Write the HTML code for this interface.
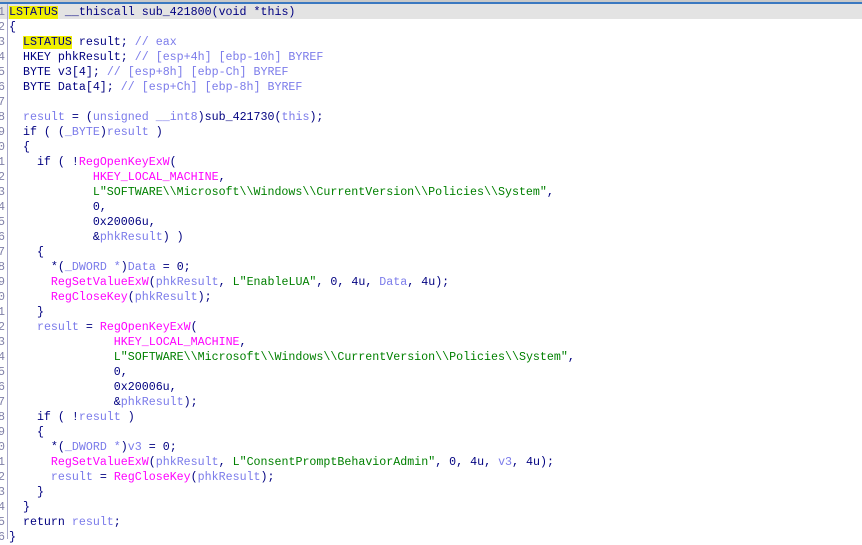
<!DOCTYPE html>
<html><head><style>
body{margin:0;width:862px;height:539px;overflow:hidden;background:#fff;position:relative;font-family:"Liberation Mono",monospace;font-size:11.65px;}
.top{position:absolute;left:0;top:0;width:862px;height:2px;background:#c9c9c9}
.blue{position:absolute;left:0;top:2px;width:862px;height:2px;background:#3a78c0}
.cur{position:absolute;left:0;top:4px;width:862px;height:15px;background:#e3e3e3}
.gut{position:absolute;left:-6px;top:5px;width:11px;color:#8080a8;text-align:right;}
.sep{position:absolute;left:7px;top:4px;width:1px;height:535px;background:#a8a8c8}
.code{position:absolute;left:9px;top:5px;color:#000080;}
.l{height:15px;line-height:15px;white-space:pre}
.v{color:#7b7bea}.f{color:#ff00ff}.s{color:#008000}.h{background:#f0f000}
</style></head><body>
<div class="top"></div><div class="blue"></div><div class="cur"></div>
<div class="sep"></div>
<div class="gut"><div class="l">1</div><div class="l">2</div><div class="l">3</div><div class="l">4</div><div class="l">5</div><div class="l">6</div><div class="l">7</div><div class="l">8</div><div class="l">9</div><div class="l">0</div><div class="l">1</div><div class="l">2</div><div class="l">3</div><div class="l">4</div><div class="l">5</div><div class="l">6</div><div class="l">7</div><div class="l">8</div><div class="l">9</div><div class="l">0</div><div class="l">1</div><div class="l">2</div><div class="l">3</div><div class="l">4</div><div class="l">5</div><div class="l">6</div><div class="l">7</div><div class="l">8</div><div class="l">9</div><div class="l">0</div><div class="l">1</div><div class="l">2</div><div class="l">3</div><div class="l">4</div><div class="l">5</div><div class="l">6</div></div>
<div class="code"><div class="l"><span class="h">LSTATUS</span> __thiscall sub_421800(void *this)</div><div class="l">{</div><div class="l">  <span class="h">LSTATUS</span> result; <span class="v">// eax</span></div><div class="l">  HKEY phkResult; <span class="v">// [esp+4h] [ebp-10h] BYREF</span></div><div class="l">  BYTE v3[4]; <span class="v">// [esp+8h] [ebp-Ch] BYREF</span></div><div class="l">  BYTE Data[4]; <span class="v">// [esp+Ch] [ebp-8h] BYREF</span></div><div class="l"> </div><div class="l">  <span class="v">result</span> = (<span class="v">unsigned __int8</span>)sub_421730(<span class="v">this</span>);</div><div class="l">  if ( (<span class="v">_BYTE</span>)<span class="v">result</span> )</div><div class="l">  {</div><div class="l">    if ( !<span class="f">RegOpenKeyExW</span>(</div><div class="l">            <span class="f">HKEY_LOCAL_MACHINE</span>,</div><div class="l">            <span class="s">L"SOFTWARE\\Microsoft\\Windows\\CurrentVersion\\Policies\\System"</span>,</div><div class="l">            0,</div><div class="l">            0x20006u,</div><div class="l">            &amp;<span class="v">phkResult</span>) )</div><div class="l">    {</div><div class="l">      *(<span class="v">_DWORD *</span>)<span class="v">Data</span> = 0;</div><div class="l">      <span class="f">RegSetValueExW</span>(<span class="v">phkResult</span>, <span class="s">L"EnableLUA"</span>, 0, 4u, <span class="v">Data</span>, 4u);</div><div class="l">      <span class="f">RegCloseKey</span>(<span class="v">phkResult</span>);</div><div class="l">    }</div><div class="l">    <span class="v">result</span> = <span class="f">RegOpenKeyExW</span>(</div><div class="l">               <span class="f">HKEY_LOCAL_MACHINE</span>,</div><div class="l">               <span class="s">L"SOFTWARE\\Microsoft\\Windows\\CurrentVersion\\Policies\\System"</span>,</div><div class="l">               0,</div><div class="l">               0x20006u,</div><div class="l">               &amp;<span class="v">phkResult</span>);</div><div class="l">    if ( !<span class="v">result</span> )</div><div class="l">    {</div><div class="l">      *(<span class="v">_DWORD *</span>)<span class="v">v3</span> = 0;</div><div class="l">      <span class="f">RegSetValueExW</span>(<span class="v">phkResult</span>, <span class="s">L"ConsentPromptBehaviorAdmin"</span>, 0, 4u, <span class="v">v3</span>, 4u);</div><div class="l">      <span class="v">result</span> = <span class="f">RegCloseKey</span>(<span class="v">phkResult</span>);</div><div class="l">    }</div><div class="l">  }</div><div class="l">  return <span class="v">result</span>;</div><div class="l">}</div></div>
</body></html>
